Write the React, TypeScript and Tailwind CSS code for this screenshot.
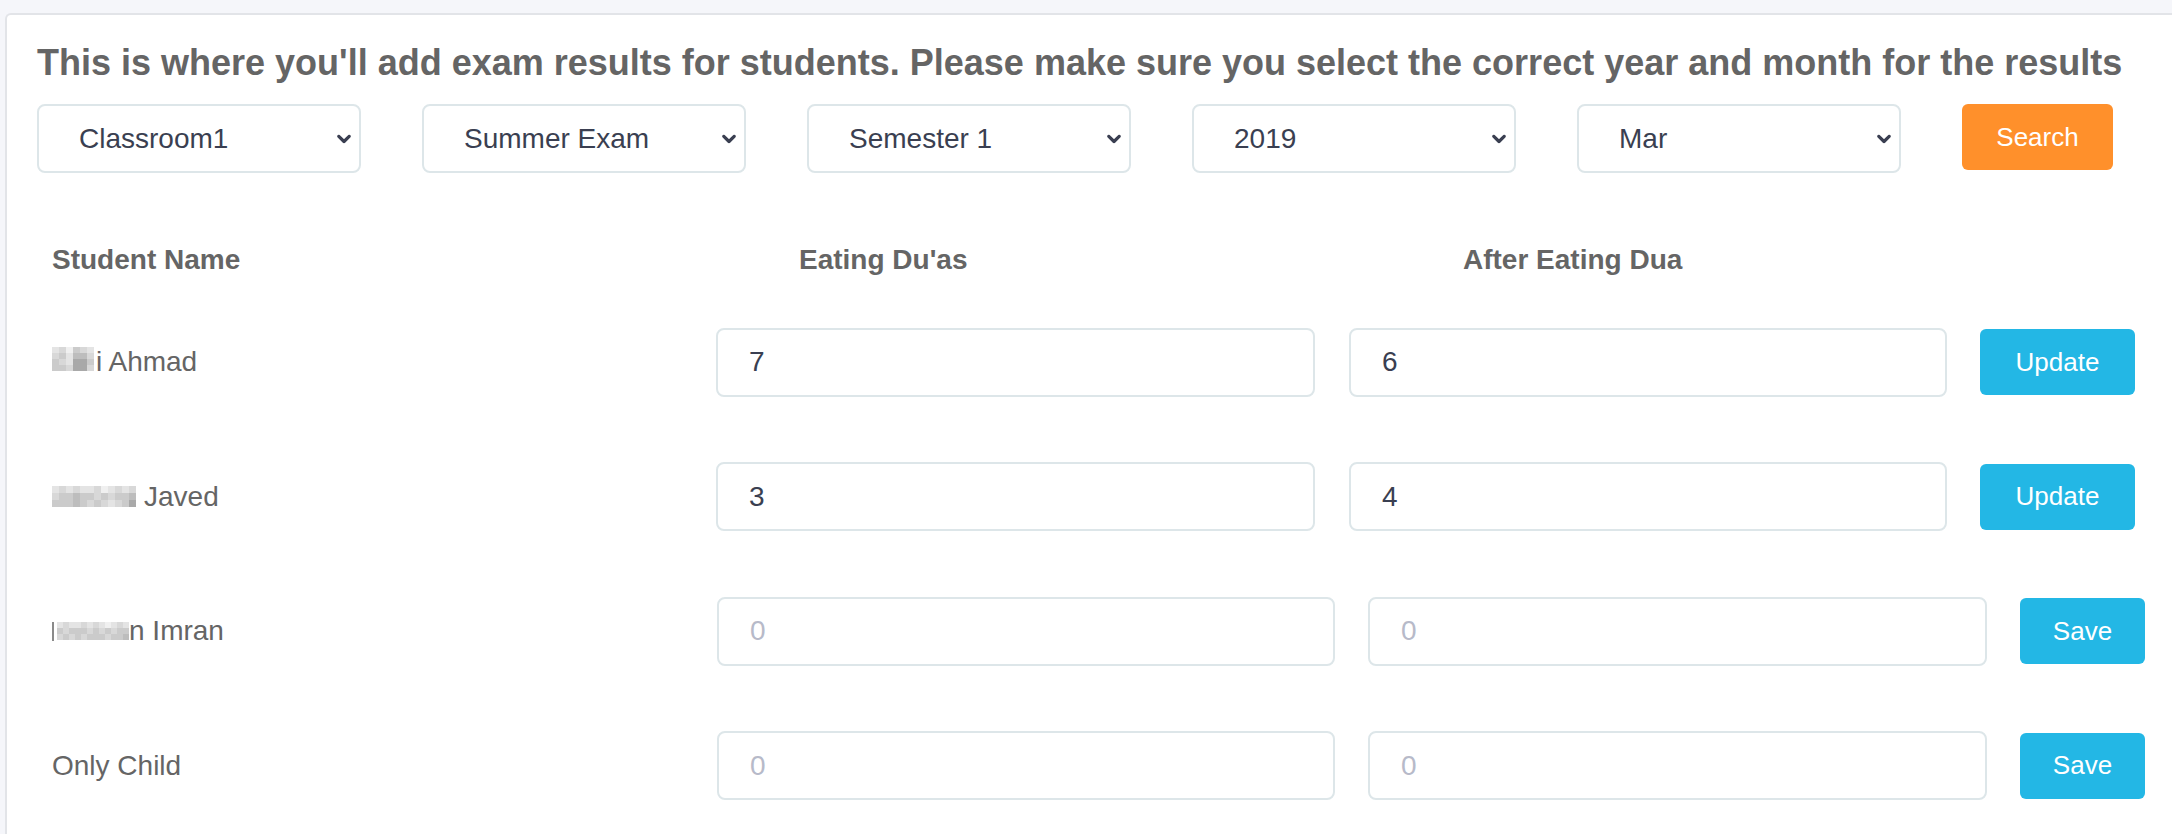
import React from "react";

const shade: Record<string, string> = {
  a: "bg-[#f0f0f0]",
  b: "bg-[#e4e4e4]",
  c: "bg-[#d8d8d8]",
  d: "bg-[#cbcbcb]",
  e: "bg-[#bdbdbd]",
  f: "bg-[#a9a9a9]",
  g: "bg-[#9a9a9a]",
};

function Pix({ rows, cell }: { rows: string[]; cell: string }) {
  return (
    <div className="flex flex-col shrink-0">
      {rows.map((r, i) => (
        <div key={i} className="flex">
          {r.split("").map((ch, j) => (
            <div key={j} className={`${cell} ${shade[ch]}`} />
          ))}
        </div>
      ))}
    </div>
  );
}

function Chevron() {
  return (
    <svg
      width="14"
      height="9"
      viewBox="0 0 14 9"
      className="absolute right-[10px] top-1/2 -translate-y-1/2 pointer-events-none"
    >
      <path
        d="M1.8 1.8 L7 7 L12.2 1.8"
        fill="none"
        stroke="#3a3f51"
        strokeWidth="3.2"
        strokeLinecap="round"
        strokeLinejoin="round"
      />
    </svg>
  );
}

function Select({ value }: { value: string }) {
  return (
    <div className="relative w-[324px] h-[69px] shrink-0">
      <select
        defaultValue={value}
        className="appearance-none w-full h-full border-2 border-[#dde6e9] rounded-[8px] bg-white pl-[40px] text-[28px] text-[#3a3f51] outline-none font-['Liberation_Sans',Arial,sans-serif]"
      >
        <option>{value}</option>
      </select>
      <Chevron />
    </div>
  );
}

function Field({ value, w }: { value?: string; w: string }) {
  return (
    <input
      defaultValue={value}
      placeholder="0"
      className={`${w} h-[69px] shrink-0 border-2 border-[#dde6e9] rounded-[8px] bg-white pl-[31px] text-[28px] text-[#3a3f51] placeholder:text-[#b7bac9] outline-none font-['Liberation_Sans',Arial,sans-serif]`}
    />
  );
}

function Btn({ label, w }: { label: string; w: string }) {
  return (
    <button
      className={`${w} h-[66px] shrink-0 rounded-[6px] bg-[#23b7e5] text-white text-[26px] font-['Liberation_Sans',Arial,sans-serif]`}
    >
      {label}
    </button>
  );
}

export default function App() {
  return (
    <div className="w-[2172px] h-[834px] overflow-hidden bg-[#f5f6fa] pt-[13px] pl-[5px] font-['Liberation_Sans',Arial,sans-serif]">
      <div className="bg-white border-t-2 border-l-2 border-[#e2e4e8] rounded-tl-[6px] h-[900px] pl-[30px] pt-[30px]">
        <h1 className="text-[36px] leading-none font-bold text-[#656565] whitespace-nowrap">
          This is where you'll add exam results for students. Please make sure you select the correct year and month for the results
        </h1>

        <div className="flex items-start gap-[61px] mt-[23px]">
          <Select value="Classroom1" />
          <Select value="Summer Exam" />
          <Select value="Semester 1" />
          <Select value="2019" />
          <Select value="Mar" />
          <button className="w-[151px] h-[66px] shrink-0 rounded-[6px] bg-[#ff902b] text-white text-[26px]">
            Search
          </button>
        </div>

        <div className="flex h-[40px] leading-[40px] mt-[67px] pl-[15px] text-[28px] font-bold text-[#656565]">
          <div className="w-[747px]">Student Name</div>
          <div className="w-[664px]">Eating Du'as</div>
          <div>After Eating Dua</div>
        </div>

        <div className="mt-[15px] pl-[15px]">
          <div className="flex items-center h-[134.5px]">
            <div className="w-[664px] flex items-center text-[28px] text-[#656565]">
              <div className="-mt-[6px] mr-[2px]">
                <Pix
                  cell="w-[7px] h-[6px]"
                  rows={["bcadcb", "cdbeec", "dcbffd", "ddcffc"]}
                />
              </div>
              <span>i Ahmad</span>
            </div>
            <Field value="7" w="w-[599px]" />
            <div className="w-[34px]" />
            <Field value="6" w="w-[598px]" />
            <div className="w-[33px]" />
            <Btn label="Update" w="w-[155px]" />
          </div>

          <div className="flex items-center h-[134.5px]">
            <div className="w-[664px] flex items-center text-[28px] text-[#656565]">
              <div className="mr-[8px]">
                <Pix
                  cell="w-[7px] h-[7px]"
                  rows={["bcbcbbcabcbc", "cddeddcdcdde", "dddedcdcbcdf"]}
                />
              </div>
              <span>Javed</span>
            </div>
            <Field value="3" w="w-[599px]" />
            <div className="w-[34px]" />
            <Field value="4" w="w-[598px]" />
            <div className="w-[33px]" />
            <Btn label="Update" w="w-[155px]" />
          </div>

          <div className="flex items-center h-[134.5px]">
            <div className="w-[665px] flex items-center text-[28px] text-[#656565]">
              <div className="w-[2px] h-[19px] bg-[#8a8a8a] mr-[3px]" />
              <Pix
                cell="w-[6px] h-[6px]"
                rows={["bcbbcbcbabcb", "dcdddcdcdcdd", "cdcdcdddcdde"]}
              />
              <span>n Imran</span>
            </div>
            <Field w="w-[618px]" />
            <div className="w-[33px]" />
            <Field w="w-[619px]" />
            <div className="w-[33px]" />
            <Btn label="Save" w="w-[125px]" />
          </div>

          <div className="flex items-center h-[134.5px]">
            <div className="w-[665px] text-[28px] text-[#656565]">Only Child</div>
            <Field w="w-[618px]" />
            <div className="w-[33px]" />
            <Field w="w-[619px]" />
            <div className="w-[33px]" />
            <Btn label="Save" w="w-[125px]" />
          </div>
        </div>
      </div>
    </div>
  );
}
